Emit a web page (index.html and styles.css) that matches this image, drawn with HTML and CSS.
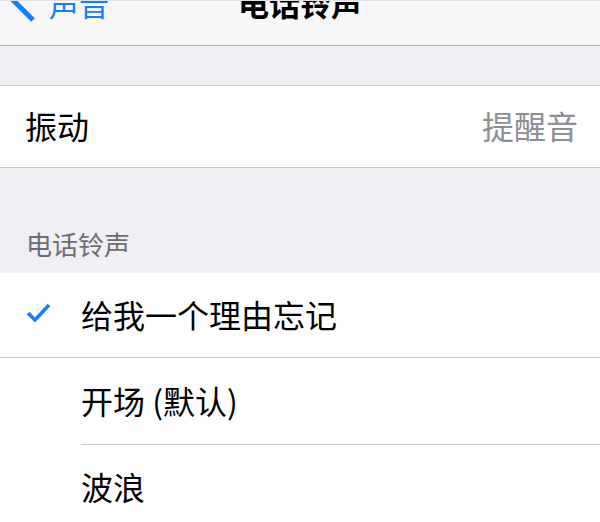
FILE: index.html
```html
<!DOCTYPE html>
<html lang="zh-CN">
<head>
<meta charset="utf-8">
<title>电话铃声</title>
<link rel="stylesheet" href="styles.css">
</head>
<body>
<div class="screen">
  <header class="nav">
    <div class="nav-row">
      <a class="back">
        <svg class="chevron" width="40" height="38" viewBox="0 0 40 38">
          <polyline points="33,-2 14,17 33,36" fill="none" stroke="#157efb" stroke-width="5" stroke-linejoin="miter"/>
        </svg>
        <span class="back-text">声音</span>
      </a>
      <div class="title">电话铃声</div>
      <div class="nav-spacer"></div>
    </div>
  </header>

  <div class="gap-top"></div>

  <div class="group">
    <div class="row row-vib">
      <span class="label">振动</span>
      <span class="value">提醒音</span>
    </div>
  </div>

  <div class="section-header">电话铃声</div>

  <div class="group">
    <div class="row tone tone-1 selected">
      <span class="check-cell">
        <svg width="28" height="24" viewBox="0 0 28 24">
          <polyline points="3,11 10,18 24,3" fill="none" stroke="#157efb" stroke-width="3.6" stroke-linejoin="miter"/>
        </svg>
      </span>
      <span class="label">给我一个理由忘记</span>
    </div>
    <div class="row tone tone-2">
      <span class="check-cell"></span>
      <span class="label inset-border">开场 (默认)</span>
    </div>
    <div class="row tone tone-3">
      <span class="check-cell"></span>
      <span class="label">波浪</span>
    </div>
  </div>
</div>
</body>
</html>
```

FILE: styles.css
```css
* {
  box-sizing: border-box;
}

html, body {
  margin: 0;
  padding: 0;
}

body {
  width: 600px;
  height: 522px;
  overflow: hidden;
  background: #efeff4;
  font-family: "Noto Sans CJK SC", "Noto Sans", sans-serif;
  color: #000;
}

.screen {
  display: flex;
  flex-direction: column;
}

.nav {
  height: 46px;
  background: #f7f7f7;
  border-top: 1px solid #e2e2e6;
  border-bottom: 1px solid #b2b2b2;
  overflow: hidden;
}

.nav-row {
  display: grid;
  grid-template-columns: 1fr auto 1fr;
  align-items: center;
  height: 38px;
  margin-top: -17px;
  line-height: 38px;
}

.back {
  display: flex;
  align-items: center;
  gap: 9px;
  color: #157efb;
  font-size: 30px;
}

.chevron {
  display: block;
  overflow: visible;
}

.back-text {
  line-height: 38px;
}

.title {
  font-size: 31px;
  font-weight: 700;
  text-align: center;
}

.gap-top {
  height: 40px;
  border-bottom: 1px solid #c8c7cc;
}

.group {
  background: #fff;
  border-bottom: 1px solid #c8c7cc;
}

.row {
  display: flex;
  align-items: center;
  font-size: 32px;
  line-height: 40px;
}

.row-vib {
  height: 81px;
  padding: 0 22px 3px 25px;
  justify-content: space-between;
}

.value {
  color: #8e8e93;
}

.section-header {
  height: 105px;
  display: flex;
  align-items: flex-end;
  padding: 0 0 14px 26px;
  font-size: 26px;
  line-height: 30px;
  color: #6d6d72;
}

.tone {
  padding-left: 25px;
  align-items: stretch;
}

.check-cell {
  width: 56px;
  flex: none;
  display: flex;
  align-items: center;
  padding-bottom: 2px;
}

.check-cell svg {
  display: block;
}

.tone .label {
  flex: 1;
  display: flex;
  align-items: center;
  padding-bottom: 3px;
}

.tone-1 {
  height: 85px;
  border-bottom: 1px solid #c2c2c6;
}

.tone-2 {
  height: 87px;
}

.tone-2 .label {
  border-bottom: 1px solid #c8c7cc;
  padding-bottom: 2px;
}

.tone-3 {
  height: 84px;
}
```
